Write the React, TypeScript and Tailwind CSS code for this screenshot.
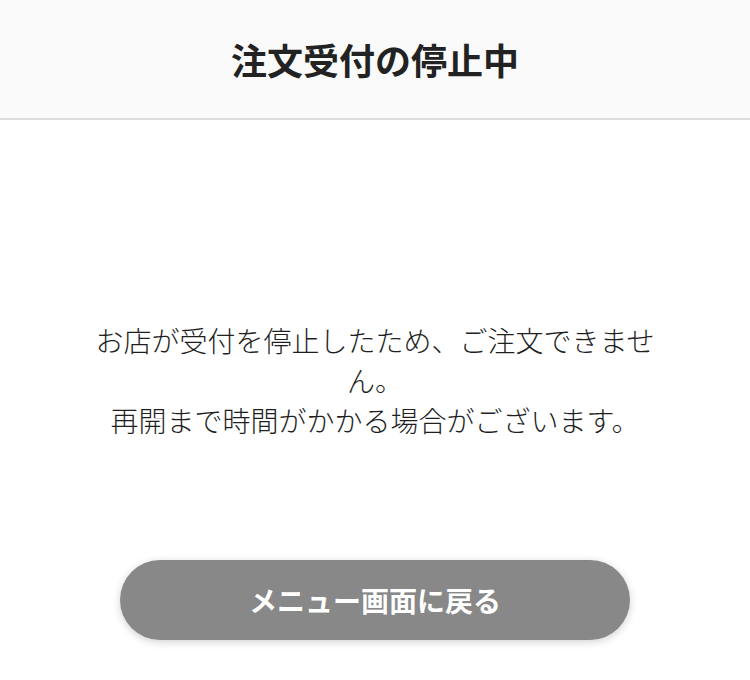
export default function App() {
  return (
    <div
      className="min-h-[680px] w-full bg-white"
      style={{ fontFamily: '"Noto Sans CJK JP", "Noto Sans", sans-serif' }}
    >
      <header className="flex h-[120px] items-center justify-center border-b-2 border-[#dddddd] bg-[#fafafa]">
        <h1 className="text-[36px] font-bold leading-none text-[#222222]">注文受付の停止中</h1>
      </header>
      <main className="flex flex-col items-center">
        <p className="mt-[200px] w-[570px] text-center text-[28px] font-light leading-[40px] text-[#1f1f1f]">
          お店が受付を停止したため、ご注文できません。
          <br />
          再開まで時間がかかる場合がございます。
        </p>
        <button
          type="button"
          className="mt-[120px] flex h-[80px] w-[510px] items-center justify-center rounded-full bg-[#888888] text-[28px] font-bold text-white shadow-[0_2px_8px_rgba(0,0,0,0.18)]"
        >
          メニュー画面に戻る
        </button>
      </main>
    </div>
  );
}
